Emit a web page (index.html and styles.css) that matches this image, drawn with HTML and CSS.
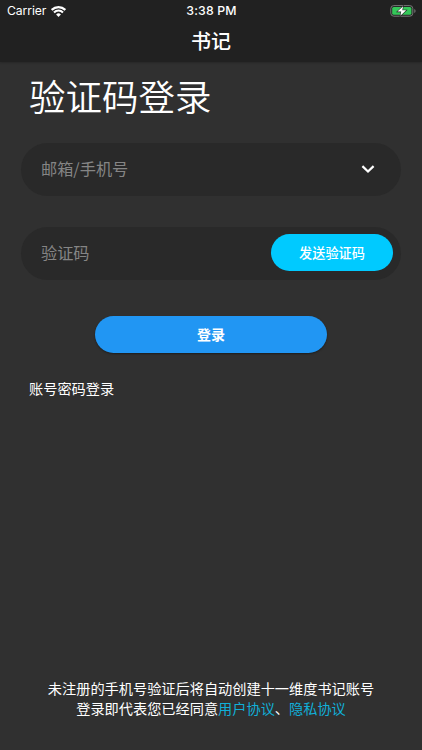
FILE: index.html
```html
<!DOCTYPE html>
<html lang="zh-CN">
<head>
<meta charset="utf-8">
<meta name="viewport" content="width=device-width, initial-scale=1">
<title>书记</title>
<link rel="stylesheet" href="styles.css">
</head>
<body>
<header class="appbar">
  <div class="status">
    <div class="carrier"><span>Carrier</span>
      <svg class="wifi" width="15" height="11" viewBox="0 0 15 11"><path d="M.7 3.9a9.6 9.6 0 0 1 13.6 0M3 6.4a6.4 6.4 0 0 1 9 0" fill="none" stroke="#fff" stroke-width="2.1"/><path d="M7.5 10.9 5.1 8.5a3.4 3.4 0 0 1 4.8 0Z" fill="#fff"/></svg>
    </div>
    <time class="time">3:38 PM</time>
    <svg class="battery" width="26" height="12" viewBox="0 0 26 12"><rect x=".8" y=".6" width="22" height="10.6" rx="3" fill="none" stroke="#777"/><rect x="2.2" y="2" width="19.2" height="7.8" rx="1.6" fill="#34c759"/><path d="M24.3 4v4c1.7-.7 1.7-3.3 0-4Z" fill="#777"/><path d="M13.1 1.3 7.4 6.6h3.8l-.8 4.2 5.8-5.5h-3.9Z" fill="#fff" stroke="#222" stroke-width="1.1" paint-order="stroke"/></svg>
  </div>
  <div class="nav-title">书记</div>
</header>
<main class="content">
  <h1 class="title">验证码登录</h1>
  <div class="field account"><span class="hint">邮箱/手机号</span>
    <svg class="chevron" width="14" height="9" viewBox="0 0 14 9"><path d="m1.4 1.1 5.6 5.4 5.6-5.4" fill="none" stroke="#fff" stroke-width="2.2"/></svg>
  </div>
  <div class="field code"><span class="hint">验证码</span><button class="send">发送验证码</button></div>
  <button class="login">登录</button>
  <a class="password">账号密码登录</a>
</main>
<footer class="terms">
  <p>未注册的手机号验证后将自动创建十一维度书记账号</p>
  <p>登录即代表您已经同意<a class="link">用户协议</a>、<a class="link">隐私协议</a></p>
</footer>
</body>
</html>
```
FILE: styles.css
```css
* { box-sizing: border-box; }
body {
  margin: 0;
  height: 750px;
  display: flex;
  flex-direction: column;
  background: #303030;
  color: #fff;
  font-family: "Noto Sans CJK SC", sans-serif;
  overflow: hidden;
}
.appbar {
  height: 62px;
  flex: none;
  background: #212121;
  box-shadow: 0 1px 2px rgba(0, 0, 0, .2);
}
.status {
  height: 22px;
  padding: 0 6px 0 7px;
  display: grid;
  grid-template-columns: 1fr auto 1fr;
  align-items: center;
  font: 13px/22px Inter, sans-serif;
}
.carrier { display: flex; align-items: center; gap: 5px; font-size: 12.2px; letter-spacing: -.1px; }
.time { font-size: 12.3px; font-weight: 500; letter-spacing: .15px; }
.battery { justify-self: end; }
.nav-title {
  font-size: 20px;
  font-weight: 500;
  line-height: 38px;
  text-align: center;
}
.content { flex: 1; padding: 0 21px; }
.title {
  margin: 7px 0 0 8px;
  font-size: 36.5px;
  font-weight: 350;
  line-height: 54px;
}
.field {
  height: 53px;
  border-radius: 27px;
  background: #292929;
  display: flex;
  align-items: center;
  justify-content: space-between;
  padding-left: 20px;
}
.account { margin-top: 20px; padding-right: 26px; }
.code { margin-top: 31px; padding-right: 8px; }
.hint {
  padding-bottom: 3px;
  color: #858585;
  font-size: 16.2px;
  line-height: 24px;
}
button {
  display: block;
  border: 0;
  padding: 0;
  color: #fff;
  font-family: inherit;
  font-weight: 500;
}
.send {
  width: 122px;
  height: 37px;
  margin-bottom: 2px;
  padding-bottom: 1px;
  border-radius: 19px;
  background: #00caff;
  font-size: 13.2px;
}
.login {
  width: 232px;
  height: 37px;
  margin: 36px auto 0;
  padding-bottom: 2px;
  border-radius: 19px;
  background: #2196f3;
  box-shadow: 0 1px 2px rgba(0, 0, 0, .4);
  font-size: 14px;
  font-weight: 700;
}
.password {
  display: block;
  margin: 25px 0 0 8px;
  font-size: 14.2px;
  line-height: 20px;
}
.terms {
  height: 72px;
  font-size: 14.2px;
  line-height: 20px;
  text-align: center;
}
.terms p { margin: 0; }
.link { color: #10afd8; }
```
